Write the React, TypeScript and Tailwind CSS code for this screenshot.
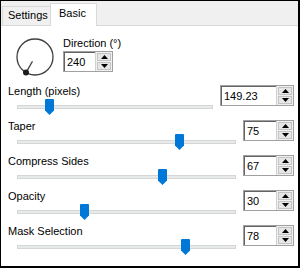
import React from "react";

const font = "font-['Liberation_Sans',Arial,sans-serif] text-[11px] text-black";

// small up/down spinner like the WinForms NumericUpDown
function Spinner({ value, widthClass }: { value: string; widthClass: string }) {
  return (
    <div className={`flex h-[21px] shrink-0 border border-[#a0a0a0] bg-white ${widthClass}`}>
      <div className="flex-1 border-t border-l border-[#646464] pl-[2px] leading-[18px]">{value}</div>
      <div className="flex w-[17px] flex-col gap-px border-l border-[#d0d0d0] bg-[#f0f0f0] p-px">
        <div className="flex flex-1 items-center justify-center border border-[#c4c4c4] bg-[#e6e6e6]">
          <svg width="7" height="4" viewBox="0 0 7 4">
            <path d="M0 4 L3.5 0 L7 4 Z" fill="#000" />
          </svg>
        </div>
        <div className="flex flex-1 items-center justify-center border border-[#c4c4c4] bg-[#e6e6e6]">
          <svg width="7" height="4" viewBox="0 0 7 4">
            <path d="M0 0 L7 0 L3.5 4 Z" fill="#000" />
          </svg>
        </div>
      </div>
    </div>
  );
}

function SliderRow({
  label,
  value,
  frac,
  widthClass,
}: {
  label: string;
  value: string;
  frac: number;
  widthClass: string;
}) {
  return (
    <div className="flex h-[35px] items-start pl-[7px] pr-[4px]">
      <div className="mr-[7px] flex flex-1 flex-col">
        <div className="mt-[-1px] h-[15px] leading-[15px]">{label}</div>
        {/* track */}
        <div className="relative ml-[9px] mt-[6px] h-[4px] bg-[#e7eaea] shadow-[inset_0_0_0_1px_#d6d6d6]">
          <svg
            className="absolute top-[-6px]"
            style={{ left: `calc(${frac} * (100% - 9px))` }}
            width="9"
            height="16"
            viewBox="0 0 9 16"
          >
            <path d="M0 1 Q0 0 1 0 H8 Q9 0 9 1 V11.5 L4.5 16 L0 11.5 Z" fill="#0078d7" />
          </svg>
        </div>
      </div>
      <Spinner value={value} widthClass={widthClass} />
    </div>
  );
}

export default function App() {
  return (
    <div className={`h-[269px] w-[300px] bg-white ${font}`}>
      <div className="flex h-[268px] w-[300px] flex-col border-t border-l border-r-2 border-b-2 border-black">
        {/* Tab strip */}
        <div className="flex h-[25px] shrink-0 items-end border-b border-[#d9d9d9] bg-[#f0f0f0] pl-px">
          <div className="h-[19px] w-[48px] border-t border-l border-[#d9d9d9] bg-[#f0f0f0] pl-[5px] leading-[17px]">
            Settings
          </div>
          <div className="relative z-10 mb-[-1px] h-[23px] w-[47px] border-t border-l border-r border-[#d9d9d9] bg-white pl-[8px] leading-[18px]">
            Basic
          </div>
        </div>

        {/* Direction */}
        <div className="flex h-[59px] shrink-0 items-start">
          <svg className="ml-[14px] mt-[11px]" width="40" height="40" viewBox="0 0 40 40">
            <circle cx="20" cy="20" r="18" fill="none" stroke="#3f3f3f" strokeWidth="1.3" />
            <line x1="17.5" y1="24.3" x2="11" y2="35.6" stroke="#3f3f3f" strokeWidth="1.3" />
            <circle cx="11" cy="35.6" r="3" fill="#1c1c1c" />
          </svg>
          <div className="ml-[8px] mt-[10px] flex flex-col">
            <div className="h-[15px] leading-[15px]">Direction (°)</div>
            <Spinner value="240" widthClass="w-[50px]" />
          </div>
        </div>

        <SliderRow label="Length (pixels)" value="149.23" frac={0.15} widthClass="w-[74px]" />
        <SliderRow label="Taper" value="75" frac={0.75} widthClass="w-[51px]" />
        <SliderRow label="Compress Sides" value="67" frac={0.67} widthClass="w-[51px]" />
        <SliderRow label="Opacity" value="30" frac={0.3} widthClass="w-[51px]" />
        <SliderRow label="Mask Selection" value="78" frac={0.78} widthClass="w-[51px]" />
      </div>
    </div>
  );
}
